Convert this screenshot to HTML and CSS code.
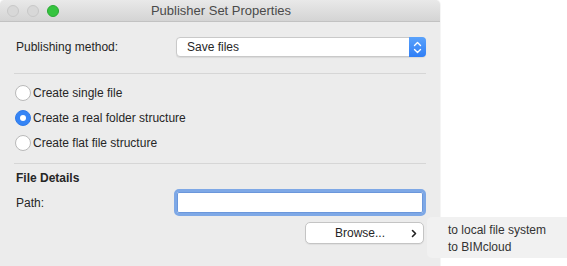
FILE: index.html
```html
<!DOCTYPE html>
<html>
<head>
<meta charset="utf-8">
<link rel="stylesheet" href="styles.css">
</head>
<body>
<div class="window">
  <div class="titlebar">
    <div class="lights">
      <span class="light"></span>
      <span class="light"></span>
      <span class="light green"></span>
    </div>
    <div class="title">Publisher Set Properties</div>
  </div>
  <div class="content">
    <div class="row method">
      <span class="label">Publishing method:</span>
      <div class="select">
        <span class="select-text">Save files</span>
        <span class="stepper">
          <svg width="9" height="13" viewBox="0 0 9 13"><path d="M1.5 4.5 L4.5 1.5 L7.5 4.5 M1.5 8.5 L4.5 11.5 L7.5 8.5" fill="none" stroke="#fff" stroke-width="1.4" stroke-linecap="round" stroke-linejoin="round"/></svg>
        </span>
      </div>
    </div>
    <div class="divider"></div>
    <div class="radios">
      <div class="radio-row"><span class="radio"></span><span>Create single file</span></div>
      <div class="radio-row"><span class="radio on"></span><span>Create a real folder structure</span></div>
      <div class="radio-row"><span class="radio"></span><span>Create flat file structure</span></div>
    </div>
    <div class="divider"></div>
    <div class="section">File Details</div>
    <div class="row path">
      <span class="label">Path:</span>
      <div class="input"></div>
    </div>
    <div class="browse-row">
      <div class="button">
        <span class="btn-text">Browse...</span>
        <svg class="chev" width="6" height="9" viewBox="0 0 6 9"><path d="M1.5 1.5 L4.5 4.5 L1.5 7.5" fill="none" stroke="#222" stroke-width="1.6" stroke-linecap="round" stroke-linejoin="round"/></svg>
      </div>
    </div>
  </div>
</div>
<div class="menu">
  <div class="menu-item">to local file system</div>
  <div class="menu-item">to BIMcloud</div>
</div>
</body>
</html>
```
FILE: styles.css
```css
html, body {
  margin: 0;
  padding: 0;
}
body {
  background: #ffffff;
  width: 567px;
  height: 266px;
  overflow: hidden;
  position: relative;
  font-family: "Liberation Sans", Arial, sans-serif;
  font-size: 12px;
  color: #262626;
}
.window {
  width: 440px;
  height: 266px;
  background: #ececec;
  border-radius: 5px 5px 0 0;
  box-shadow: 0 0 0 1px rgba(0,0,0,0.04);
  display: flex;
  flex-direction: column;
}
.titlebar {
  height: 22px;
  background: linear-gradient(#e9e9e9, #d4d4d4);
  border-bottom: 1px solid #c2c2c2;
  border-radius: 5px 5px 0 0;
  position: relative;
  display: flex;
  align-items: center;
  justify-content: center;
  box-sizing: border-box;
}
.lights {
  position: absolute;
  left: 7px;
  top: 5px;
  display: flex;
  gap: 8px;
}
.light {
  width: 12px;
  height: 12px;
  border-radius: 50%;
  background: #d8d8d8;
  box-sizing: border-box;
  border: 1px solid #c8c8c8;
}
.light.green {
  background: #35c43f;
  border-color: #2aa934;
}
.title {
  font-size: 13px;
  color: #4a4a4a;
  padding-left: 2px;
}
.content {
  padding: 0 14px 0 14px;
  display: flex;
  flex-direction: column;
}
.row {
  display: flex;
  align-items: center;
}
.label {
  width: 160px;
  padding-left: 2px;
  flex: none;
}
.method {
  margin-top: 15px;
  height: 20px;
}
.select {
  width: 251px;
  height: 20px;
  box-sizing: border-box;
  background: #fff;
  border: 1px solid #c9c9c9;
  border-radius: 4px;
  display: flex;
  align-items: center;
  justify-content: space-between;
  box-shadow: 0 1px 1px rgba(0,0,0,0.08);
  position: relative;
}
.select-text {
  padding-left: 10px;
  font-size: 12px;
}
.stepper {
  width: 17px;
  height: 20px;
  margin: -1px -1px -1px 0;
  background: linear-gradient(#5aa2fb, #2f7ef6);
  border-radius: 0 4px 4px 0;
  display: flex;
  align-items: center;
  justify-content: center;
}
.divider {
  height: 1px;
  background: #d6d6d6;
}
.method + .divider {
  margin-top: 16px;
}
.radios {
  display: flex;
  flex-direction: column;
  padding-top: 11px;
  gap: 9px;
}
.radio-row {
  display: flex;
  align-items: center;
  height: 16px;
  gap: 2px;
}
.radio {
  width: 16px;
  height: 16px;
  box-sizing: border-box;
  border-radius: 50%;
  background: #fff;
  border: 1px solid #b9b9b9;
  margin-left: 1px;
}
.radio.on {
  background: #3584f5;
  border-color: #2f7bea;
  display: flex;
  align-items: center;
  justify-content: center;
}
.radio.on::after {
  content: "";
  width: 6px;
  height: 6px;
  border-radius: 50%;
  background: #fff;
}
.radios + .divider {
  margin-top: 12px;
}
.section {
  font-weight: bold;
  margin-top: 7px;
  padding-left: 2px;
  height: 14px;
  line-height: 14px;
}
.path {
  margin-top: 4px;
  height: 27px;
}
.input {
  width: 256px;
  height: 27px;
  margin-left: -2px;
  box-sizing: border-box;
  background: #fff;
  border: 3px solid #7ea8e6;
  border-radius: 5px;
  box-shadow: inset 0 0 0 1px #6b97db;
}
.browse-row {
  display: flex;
  justify-content: flex-end;
  margin-top: 6px;
  padding-right: 2px;
}
.button {
  width: 119px;
  height: 22px;
  box-sizing: border-box;
  background: #fff;
  border: 1px solid #c4c4c4;
  border-radius: 5px;
  display: flex;
  align-items: center;
  position: relative;
  box-shadow: 0 1px 1px rgba(0,0,0,0.06);
}
.btn-text {
  flex: 1;
  text-align: center;
  font-size: 12px;
  padding-right: 9px;
}
.chev {
  position: absolute;
  right: 6px;
  top: 6px;
}
.menu {
  position: absolute;
  left: 427px;
  top: 217px;
  width: 140px;
  height: 41px;
  background: #f1f1f1;
  border-radius: 5px 0 0 5px;
  padding: 5px 0 0 21px;
  box-sizing: border-box;
  font-size: 12px;
  color: #333;
}
.menu-item {
  height: 17px;
  line-height: 17px;
}
```
